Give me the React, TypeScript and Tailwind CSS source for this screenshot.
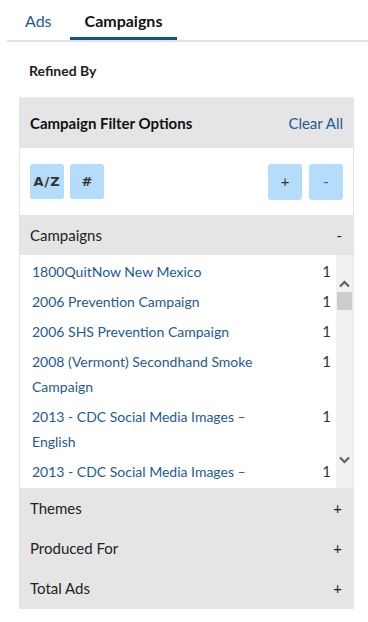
import React from "react";

const campaigns = [
  { name: "1800QuitNow New Mexico", count: 1 },
  { name: "2006 Prevention Campaign", count: 1 },
  { name: "2006 SHS Prevention Campaign", count: 1 },
  { name: "2008 (Vermont) Secondhand Smoke Campaign", count: 1 },
  { name: "2013 - CDC Social Media Images – English", count: 1 },
  { name: "2013 - CDC Social Media Images – Spanish", count: 1 },
];

const sections = ["Themes", "Produced For", "Total Ads"];

function Chevron({ up }: { up?: boolean }) {
  return (
    <svg width="11" height="8" viewBox="0 0 11 8" className={up ? "" : "rotate-180"}>
      <path d="M1 6.5 L5.5 2 L10 6.5" fill="none" stroke="#5f5f5f" strokeWidth="2.2" />
    </svg>
  );
}

export default function App() {
  return (
    <div className="w-[368px] h-[622px] bg-white font-['Lato',sans-serif] text-[#222]">
      {/* Tabs */}
      <div className="ml-[7px] flex border-b-2 border-[#e2e2e2] h-[42px]">
        <div className="px-[18px] pt-[9px] text-[16px] text-[#1d5a96]">Ads</div>
        <div className="px-[15px] pt-[9px] text-[16px] font-bold text-[#111] border-b-[3px] border-[#14518f] h-[40px]">
          Campaigns
        </div>
      </div>

      <div className="px-[29px] pt-[20px] pb-[18px] text-[14px] leading-[17px] font-bold text-[#222]">Refined By</div>

      {/* Filter panel */}
      <div className="mx-[19px] w-[335px] bg-[#e5e5e5] border-t border-[#ececec] pb-[1px]">
        <div className="h-[50px] flex items-center justify-between pl-[11px] pr-[11px]">
          <span className="text-[15px] font-bold text-[#111]">Campaign Filter Options</span>
          <span className="text-[15px] text-[#1d5a96]">Clear All</span>
        </div>

        <div className="mx-px bg-white h-[67px] flex items-center justify-between px-[10px]">
          <div className="flex gap-[6px]">
            <button className="w-[34px] h-[35px] rounded-[3px] bg-[#b5dcfb] text-[13px] font-bold text-[#333] font-['DejaVu_Sans',sans-serif] tracking-[1px]">
              A/Z
            </button>
            <button className="w-[34px] h-[35px] rounded-[3px] bg-[#b5dcfb] text-[13px] font-bold text-[#333] font-['DejaVu_Sans',sans-serif]">
              #
            </button>
          </div>
          <div className="flex gap-[7px]">
            <button className="w-[34px] h-[36px] rounded-[3px] bg-[#b5dcfb] text-[15px] text-[#333]">+</button>
            <button className="w-[34px] h-[36px] rounded-[3px] bg-[#b5dcfb] text-[15px] text-[#555]">-</button>
          </div>
        </div>

        <div className="h-[40px] flex items-center justify-between pl-[11px] pr-[12px] text-[15px] text-[#222]">
          <span>Campaigns</span>
          <span>-</span>
        </div>

        <div className="ml-px mr-px h-[233px] flex bg-white">
          <div className="flex-1 overflow-hidden pt-[4px] pl-[12px] pr-[5px]">
            {campaigns.map((c) => (
              <div key={c.name} className="flex justify-between pb-[5px] leading-[25px]">
                <span className="w-[250px] text-[14px] text-[#1d5a96]">{c.name}</span>
                <span className="text-[15px] text-[#333]">{c.count}</span>
              </div>
            ))}
          </div>
          <div className="w-[17px] bg-[#f1f1f1] flex flex-col items-center">
            <div className="h-[37px] flex items-end pb-[4px]">
              <Chevron up />
            </div>
            <div className="w-[15px] h-[18px] bg-[#cdcdcd]" />
            <div className="flex-1" />
            <div className="h-[36px] flex items-start pt-[4px]">
              <Chevron />
            </div>
          </div>
        </div>

        {sections.map((s) => (
          <div key={s} className="h-[40px] flex items-center justify-between pl-[11px] pr-[12px] text-[15px] text-[#222]">
            <span>{s}</span>
            <span>+</span>
          </div>
        ))}
      </div>
    </div>
  );
}
